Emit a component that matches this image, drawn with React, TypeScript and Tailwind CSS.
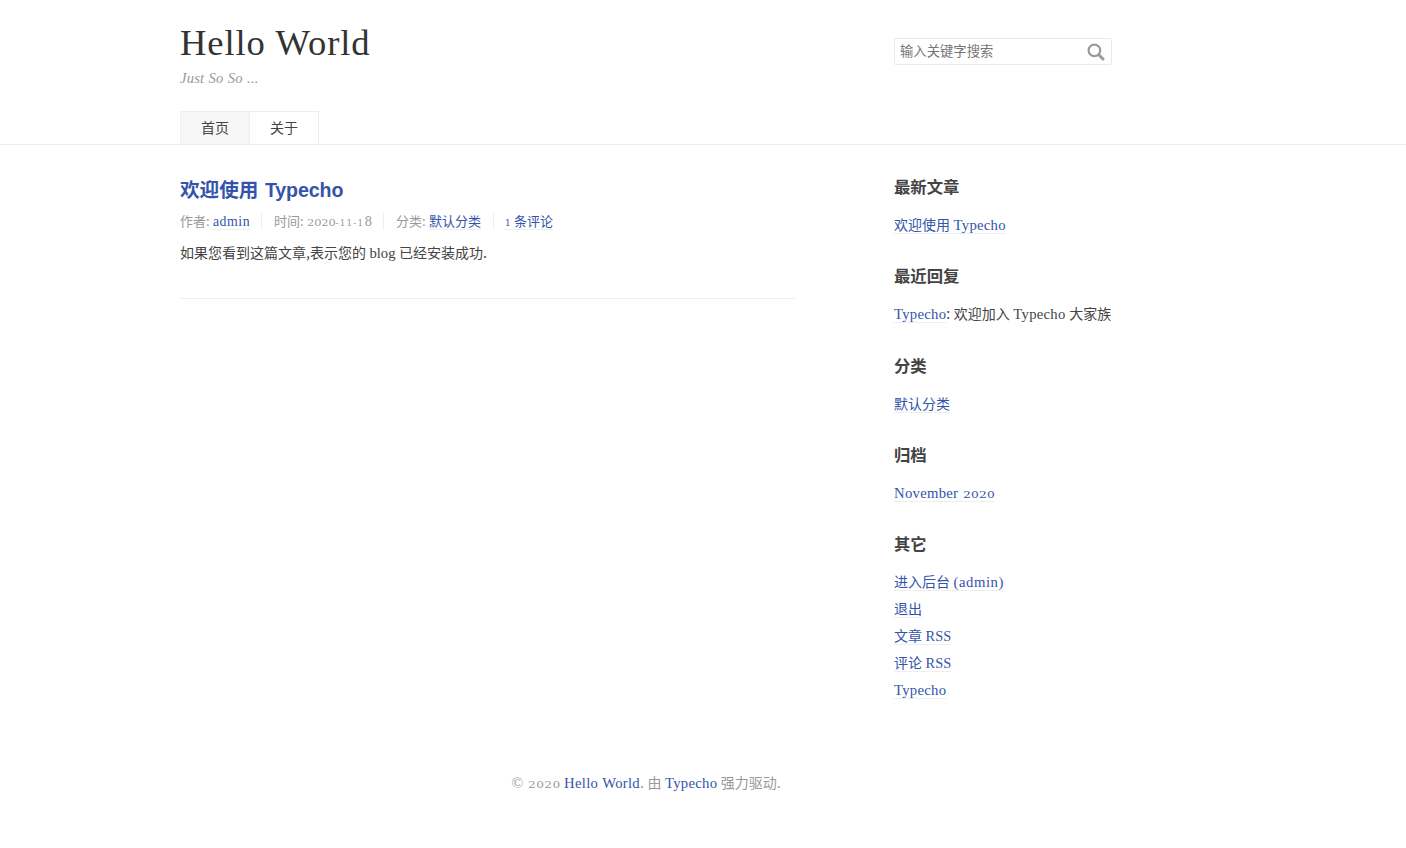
import type { ReactNode } from 'react'

const latin = "font-['Liberation_Serif','Noto_Sans_CJK_SC',serif]"

function En({ children, className = 'text-[14.7px] tracking-[0.28px]' }: { children: ReactNode; className?: string }) {
  return <span className={`${latin} leading-none ${className}`}>{children}</span>
}

function Year({ className = 'w-[32px] text-[9.4px] tracking-[0.2px]' }: { className?: string }) {
  return (
    <span className={`inline-block font-['DejaVu_Serif',serif] leading-none ${className}`}>
      <span className="inline-block origin-left scale-x-[1.3]">2020</span>
    </span>
  )
}

function Link({ children, className = 'h-[18px] leading-[17px]' }: { children: ReactNode; className?: string }) {
  return (
    <a href="#" className={`inline-block whitespace-nowrap border-b border-[#eee] text-[#3354aa] ${className}`}>
      {children}
    </a>
  )
}

function Widget({ title, children }: { title: string; children: ReactNode }) {
  return (
    <section className="mb-[29.3px]">
      <h3 className="h-[24px] text-[16.38px] font-bold leading-[24px]">{title}</h3>
      <ul className="mt-[18px] flex flex-col gap-[9px]">{children}</ul>
    </section>
  )
}

function Item({ children }: { children: ReactNode }) {
  return <li className="flex h-[18px] whitespace-nowrap leading-[17px]">{children}</li>
}

export default function App() {
  return (
    <div className="h-[848px] overflow-hidden bg-white font-['Noto_Sans_CJK_SC',sans-serif] text-[14px] text-[#444] [word-spacing:0.4px]">
      <header className="h-[145px] border-b border-[#eee]">
        <div className="ml-[180px] flex h-[111px] w-[932px] justify-between">
          <div>
            <h1 className={`${latin} mt-[22px] h-[42px] whitespace-nowrap text-[36.6px] leading-[42px] tracking-[0.9px] text-[#333]`}>
              Hello World
            </h1>
            <p className={`${latin} mt-[4px] h-[20px] whitespace-nowrap text-[14.6px] italic leading-[20px] tracking-[0.2px] text-[#999]`}>
              Just So So ...
            </p>
          </div>
          <form className="mt-[38px] flex h-[27px] w-[218px] items-center rounded-[2px] border border-[#e9e9e9] pl-[5px] pr-[6px]">
            <span className="flex-1 pb-[2px] text-[13.33px] leading-[22px] text-[#757575]">输入关键字搜索</span>
            <svg width="18" height="18" viewBox="0 0 18 18" fill="none" stroke="#999">
              <circle cx="7.4" cy="7.4" r="5.8" strokeWidth="2.2" />
              <path d="M11.8 11.8L16 16" strokeWidth="2.9" strokeLinecap="round" />
            </svg>
          </form>
        </div>
        <nav className="ml-[180px] flex h-[33px]">
          <a href="#" className="w-[70px] border-x border-t border-[#eee] bg-[#f6f6f6] text-center leading-[30px]">首页</a>
          <a href="#" className="w-[69px] border-r border-t border-[#eee] text-center leading-[30px]">关于</a>
        </nav>
      </header>

      <div className="ml-[180px] flex h-[610px] w-[932px] justify-between">
        <main className="w-[615px]">
          <article className="h-[154px] border-b border-[#eee]">
            <h2 className="pt-[30px] text-[19.6px] font-bold leading-[28px] text-[#3354aa]">
              欢迎使用<span className="ml-[6.5px] font-['Liberation_Sans',sans-serif] tracking-[-0.1px]">Typecho</span>
            </h2>
            <div className="mt-[9px] flex h-[18px] whitespace-nowrap text-[13px] leading-[15px] text-[#999]">
              <div className="w-[81px]">
                作者: <Link className="h-[17px] leading-[15px]"><En className="text-[13.8px] tracking-[0.55px]">admin</En></Link>
              </div>
              <div className="h-[17px] w-[123px] border-x border-[#eee] pl-[12px]">
                时间: <Year className="w-[28.5px] text-[8.8px] tracking-[-0.1px]" /><span className="font-['DejaVu_Serif',serif] text-[8.8px] tracking-[1.25px]">-11-1</span><span className="font-['DejaVu_Serif',serif] text-[12px]">8</span>
              </div>
              <div className="h-[17px] w-[109px] pl-[12px]">
                分类: <Link className="h-[17px] leading-[15px]">默认分类</Link>
              </div>
              <div className="h-[17px] border-l border-[#eee] pl-[11px]">
                <Link className="h-[17px] leading-[15px]"><span className="font-['DejaVu_Serif',serif] text-[8.8px]">1</span> 条评论</Link>
              </div>
            </div>
            <p className="mt-[10px] whitespace-nowrap leading-[22px]">
              如果您看到这篇文章,表示您的 <En className="text-[14.7px]">blog</En> 已经安装成功.
            </p>
          </article>
        </main>

        <aside className="w-[218px] pt-[29px]">
          <Widget title="最新文章">
            <Item><Link>欢迎使用 <En>Typecho</En></Link></Item>
          </Widget>
          <Widget title="最近回复">
            <Item>
              <Link><En>Typecho</En></Link>
              <span className="whitespace-pre">: 欢迎加入 <En>Typecho</En> 大家族</span>
            </Item>
          </Widget>
          <Widget title="分类">
            <Item><Link>默认分类</Link></Item>
          </Widget>
          <Widget title="归档">
            <Item><Link><En>November </En><Year /></Link></Item>
          </Widget>
          <Widget title="其它">
            <Item><Link>进入后台 <En className="text-[14.7px] tracking-[0.55px]">(admin)</En></Link></Item>
            <Item><Link>退出</Link></Item>
            <Item><Link>文章 <En className="text-[14.4px]">RSS</En></Link></Item>
            <Item><Link>评论 <En className="text-[14.4px]">RSS</En></Link></Item>
            <Item><Link><En>Typecho</En></Link></Item>
          </Widget>
        </aside>
      </div>

      <footer className="ml-[511.5px] mt-[15px] whitespace-nowrap leading-[24px] text-[#999]">
        <En className="text-[15.5px]">© </En><Year className="w-[33px] text-[9.4px] tracking-[0.3px]" /> <a href="#" className="text-[#3354aa]"><En>Hello World</En></a>. 由{' '}
        <a href="#" className="text-[#3354aa]"><En>Typecho</En></a> 强力驱动.
      </footer>
    </div>
  )
}
